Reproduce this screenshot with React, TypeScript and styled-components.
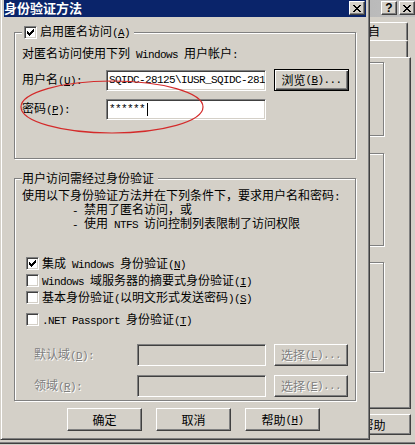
import React from 'react';
import styled, { createGlobalStyle, css } from 'styled-components';

const FACE = '#d4d0c8';

const GlobalStyle = createGlobalStyle`
  html, body {
    margin: 0;
    padding: 0;
    background: ${FACE};
  }
  body {
    font-family: "Noto Sans CJK SC", "Noto Sans", sans-serif;
    font-size: 12px;
    color: #000;
  }
`;

const raised = css`
  background: ${FACE};
  border: 1px solid;
  border-color: #fff #404040 #404040 #fff;
  box-shadow: inset -1px -1px 0 #808080;
`;

const sunken = css`
  border: 1px solid;
  border-color: #808080 #fff #fff #808080;
  box-shadow: inset 1px 1px 0 #404040, inset -1px -1px 0 ${FACE};
`;

const etched = css`
  border: 1px solid #808080;
  box-shadow: 1px 1px 0 #fff, inset 1px 1px 0 #fff;
`;

const disabledText = css`
  color: #808080;
  text-shadow: 1px 1px 0 #fff;
`;

const Desktop = styled.div`
  position: relative;
  width: 415px;
  height: 445px;
  overflow: hidden;
  background: ${FACE};
`;

const Window = styled.div<{ $left: number; $width: number; $height: number }>`
  position: absolute;
  top: -5px;
  left: ${(p) => p.$left}px;
  width: ${(p) => p.$width}px;
  height: ${(p) => p.$height}px;
  box-sizing: border-box;
  display: flex;
  flex-direction: column;
  padding: 3px;
  background: ${FACE};
  border: 1px solid;
  border-color: ${FACE} #404040 #404040 ${FACE};
  box-shadow: inset 1px 1px 0 #fff, inset -1px -1px 0 #808080;
`;

const TitleBar = styled.div<{ $active?: boolean }>`
  flex: none;
  height: 18px;
  display: flex;
  align-items: center;
  justify-content: ${(p) => (p.$active ? 'space-between' : 'flex-end')};
  padding-right: 1px;
  background: ${(p) =>
    p.$active ? '#0a246a' : 'linear-gradient(to right, #808080, #c0c0c0)'};
`;

const TitleText = styled.span`
  color: #fff;
  font-size: 13px;
  font-weight: bold;
  line-height: 18px;
  white-space: nowrap;
`;

const CaptionButtons = styled.div`
  display: flex;
  gap: 2px;
`;

const CaptionButton = styled.div`
  ${raised};
  box-sizing: border-box;
  width: 16px;
  height: 14px;
  display: flex;
  align-items: center;
  justify-content: center;
  font-family: "Liberation Sans", sans-serif;
  font-size: 12px;
  font-weight: bold;
  line-height: 12px;
`;

const Client = styled.div`
  display: flex;
  flex-direction: column;
  padding: 15px 10px 0;
`;

const GroupBox = styled.div<{ $height: number; $mt?: number; $pt: number }>`
  ${etched};
  position: relative;
  box-sizing: border-box;
  height: ${(p) => p.$height}px;
  margin-top: ${(p) => p.$mt ?? 0}px;
  padding: ${(p) => p.$pt}px 0 0 7px;
`;

const Legend = styled.div`
  position: absolute;
  top: -8px;
  left: 7px;
  height: 14px;
  display: flex;
  align-items: center;
  gap: 3px;
  padding-right: 4px;
  background: ${FACE};
  line-height: 14px;
  white-space: nowrap;
`;

const Text = styled.div<{ $lh?: number; $indent?: number }>`
  line-height: ${(p) => p.$lh ?? 14}px;
  padding-left: ${(p) => p.$indent ?? 0}px;
  white-space: nowrap;
`;

const Latin = styled.span`
  font-family: "Liberation Mono", monospace;
  font-size: 11px;
  letter-spacing: -0.6px;
`;

const Under = styled.u`
  text-underline-offset: 1px;
`;

const FieldRow = styled.div<{ $mt: number; $indent?: number }>`
  display: flex;
  align-items: center;
  height: 22px;
  margin-top: ${(p) => p.$mt}px;
  padding-left: ${(p) => p.$indent ?? 0}px;
`;

const FieldLabel = styled.div<{ $width: number; $disabled?: boolean }>`
  flex: none;
  width: ${(p) => p.$width}px;
  line-height: 14px;
  white-space: nowrap;
  ${(p) => p.$disabled && disabledText};
`;

const Field = styled.div<{ $width: number; $disabled?: boolean }>`
  ${sunken};
  flex: none;
  box-sizing: border-box;
  width: ${(p) => p.$width}px;
  height: ${(p) => (p.$disabled ? 22 : 21)}px;
  display: flex;
  align-items: center;
  padding-left: 2px;
  overflow: hidden;
  white-space: nowrap;
  line-height: 14px;
  background: ${(p) => (p.$disabled ? FACE : '#fff')};
`;

const Caret = styled.span`
  display: inline-block;
  width: 1px;
  height: 13px;
  margin-left: 2px;
  background: #000;
`;

const Button = styled.div<{
  $width: number;
  $height: number;
  $ml?: number;
  $default?: boolean;
  $disabled?: boolean;
}>`
  flex: none;
  box-sizing: border-box;
  width: ${(p) => p.$width}px;
  height: ${(p) => p.$height}px;
  margin-left: ${(p) => p.$ml ?? 0}px;
  display: flex;
  align-items: center;
  justify-content: center;
  line-height: 14px;
  white-space: nowrap;
  ${(p) =>
    p.$default
      ? css`
          background: ${FACE};
          border: 1px solid #000;
          box-shadow: inset 1px 1px 0 #fff, inset -1px -1px 0 #404040,
            inset -2px -2px 0 #808080;
        `
      : raised};
  ${(p) => p.$disabled && disabledText};
`;

const CheckRow = styled.div<{ $mt?: number }>`
  display: flex;
  align-items: center;
  gap: 3px;
  height: 17px;
  margin-top: ${(p) => p.$mt ?? 0}px;
  padding-left: 2px;
  line-height: 14px;
  white-space: nowrap;
`;

const CheckBox = styled.span`
  ${sunken};
  flex: none;
  box-sizing: border-box;
  width: 13px;
  height: 13px;
  margin-left: 2px;
  position: relative;
  background: #fff;
`;

const CheckMark = styled.svg`
  position: absolute;
  left: -1px;
  top: -1px;
`;

const ButtonRow = styled.div<{ $pl?: number; $pr?: number; $mt: number; $gap?: number; $end?: boolean }>`
  display: flex;
  justify-content: ${(p) => (p.$end ? 'flex-end' : 'flex-start')};
  gap: ${(p) => p.$gap ?? 0}px;
  margin-top: ${(p) => p.$mt}px;
  padding-left: ${(p) => p.$pl ?? 0}px;
  padding-right: ${(p) => p.$pr ?? 0}px;
`;

const Annotation = styled.svg`
  position: absolute;
  left: 0;
  top: 0;
  overflow: visible;
  pointer-events: none;
`;

/* property sheet behind the dialog */

const SheetBody = styled.div`
  display: flex;
  flex-direction: column;
  padding-top: 5px;
`;

const TabRow = styled.div<{ $height: number }>`
  display: flex;
  justify-content: flex-end;
  height: ${(p) => p.$height}px;
  padding-right: 8px;
`;

const Tab = styled.div`
  box-sizing: border-box;
  width: 120px;
  height: 100%;
  padding-right: 27px;
  border-top: 1px solid #fff;
  border-left: 1px solid #fff;
  border-right: 1px solid #404040;
  border-radius: 2px 2px 0 0;
  box-shadow: inset -1px 0 0 #808080;
  text-align: right;
  line-height: 16px;
  white-space: nowrap;
`;

const SheetPanel = styled.div`
  box-sizing: border-box;
  height: 352px;
  margin-right: 5px;
  display: flex;
  flex-direction: column;
  padding: 4px 26px 0 10px;
  border: 1px solid;
  border-color: #fff #404040 #404040 #fff;
  box-shadow: inset -1px -1px 0 #808080;
`;

const SheetGroup = styled.div<{ $height: number; $mt: number }>`
  ${etched};
  box-sizing: border-box;
  height: ${(p) => p.$height}px;
  margin-top: ${(p) => p.$mt}px;
`;

const Key = ({ k }: { k: string }) => (
  <Latin>
    (<Under>{k}</Under>)
  </Latin>
);

const Check = ({ checked }: { checked?: boolean }) => (
  <CheckBox>
    {checked && (
      <CheckMark width="13" height="13" viewBox="0 0 13 13" shapeRendering="crispEdges">
        <path
          fill="#000"
          d="M3 5h1v3h-1zM4 6h1v3h-1zM5 7h1v3h-1zM6 6h1v3h-1zM7 5h1v3h-1zM8 4h1v3h-1zM9 3h1v3h-1z"
        />
      </CheckMark>
    )}
  </CheckBox>
);

const CloseGlyph = () => (
  <svg width="8" height="7" viewBox="0 0 8 7" shapeRendering="crispEdges">
    <path
      fill="#000"
      d="M0 0h2v1h-2zM6 0h2v1h-2zM1 1h2v1h-2zM5 1h2v1h-2zM2 2h4v1h-4zM3 3h2v1h-2zM2 4h4v1h-4zM1 5h2v1h-2zM5 5h2v1h-2zM0 6h2v1h-2zM6 6h2v1h-2z"
    />
  </svg>
);

const PropertySheet = () => (
  <Window $left={-60} $width={480} $height={449}>
    <TitleBar>
      <CaptionButtons>
        <CaptionButton>?</CaptionButton>
        <CaptionButton>
          <CloseGlyph />
        </CaptionButton>
      </CaptionButtons>
    </TitleBar>
    <SheetBody>
      <TabRow $height={18}>
        <Tab>自</Tab>
      </TabRow>
      <TabRow $height={17}>
        <Tab />
      </TabRow>
      <SheetPanel>
        <SheetGroup $height={74} $mt={0} />
        <SheetGroup $height={93} $mt={17} />
        <SheetGroup $height={110} $mt={16} />
      </SheetPanel>
      <ButtonRow $mt={5} $pr={5} $end>
        <Button $width={75} $height={21}>帮助</Button>
      </ButtonRow>
    </SheetBody>
  </Window>
);

const AuthDialog = () => (
  <Window $left={0} $width={370} $height={445}>
    <TitleBar $active>
      <TitleText>身份验证方法</TitleText>
      <CaptionButton>
        <CloseGlyph />
      </CaptionButton>
    </TitleBar>
    <Client>
      <GroupBox $height={127} $pt={13}>
        <Legend>
          <Check checked />
          <span>
            启用匿名访问<Key k="A" />
          </span>
        </Legend>
        <Text>
          对匿名访问使用下列<Latin> Windows </Latin>用户帐户<Latin>:</Latin>
        </Text>
        <FieldRow $mt={7}>
          <FieldLabel $width={84}>
            用户名<Key k="U" />
            <Latin>:</Latin>
          </FieldLabel>
          <Field $width={160}>
            <Latin>SQIDC-28125\IUSR_SQIDC-281</Latin>
          </Field>
          <Button $width={75} $height={22} $ml={8} $default>
            浏览<Key k="B" />
            <Latin>...</Latin>
          </Button>
        </FieldRow>
        <FieldRow $mt={7}>
          <FieldLabel $width={84}>
            密码<Key k="P" />
            <Latin>:</Latin>
          </FieldLabel>
          <Field $width={160}>
            <Latin>******</Latin>
            <Caret />
          </Field>
        </FieldRow>
        <Annotation width="200" height="110">
          <ellipse cx="97" cy="74" rx="91" ry="26" fill="none" stroke="#d42a2a" strokeWidth="1.2" />
        </Annotation>
      </GroupBox>

      <GroupBox $height={223} $mt={19} $pt={10}>
        <Legend>
          <span>用户访问需经过身份验证</span>
        </Legend>
        <Text $lh={12}>
          使用以下身份验证方法并在下列条件下，要求用户名和密码<Latin>:</Latin>
        </Text>
        <Text $lh={12} $indent={50}>
          <Latin>- </Latin>禁用了匿名访问，或
        </Text>
        <Text $lh={12} $indent={50}>
          <Latin>- </Latin>使用<Latin> NTFS </Latin>访问控制列表限制了访问权限
        </Text>

        <CheckRow $mt={24}>
          <Check checked />
          <span>
            集成<Latin> Windows </Latin>身份验证<Key k="N" />
          </span>
        </CheckRow>
        <CheckRow>
          <Check />
          <span>
            <Latin>Windows </Latin>域服务器的摘要式身份验证<Key k="I" />
          </span>
        </CheckRow>
        <CheckRow>
          <Check />
          <span>
            基本身份验证<Latin>(</Latin>以明文形式发送密码<Latin>)</Latin>
            <Key k="S" />
          </span>
        </CheckRow>
        <CheckRow $mt={5}>
          <Check />
          <span>
            <Latin>.NET Passport </Latin>身份验证<Key k="T" />
          </span>
        </CheckRow>

        <FieldRow $mt={16} $indent={12}>
          <FieldLabel $width={103} $disabled>
            默认域<Key k="D" />
            <Latin>:</Latin>
          </FieldLabel>
          <Field $width={129} $disabled />
          <Button $width={74} $height={22} $ml={8} $disabled>
            选择<Key k="L" />
            <Latin>...</Latin>
          </Button>
        </FieldRow>
        <FieldRow $mt={9} $indent={12}>
          <FieldLabel $width={103} $disabled>
            领域<Key k="R" />
            <Latin>:</Latin>
          </FieldLabel>
          <Field $width={129} $disabled />
          <Button $width={74} $height={22} $ml={8} $disabled>
            选择<Key k="E" />
            <Latin>...</Latin>
          </Button>
        </FieldRow>
      </GroupBox>

      <ButtonRow $mt={7} $pl={53} $gap={14}>
        <Button $width={75} $height={23}>确定</Button>
        <Button $width={75} $height={23}>取消</Button>
        <Button $width={75} $height={23}>
          帮助<Key k="H" />
        </Button>
      </ButtonRow>
    </Client>
  </Window>
);

const App: React.FC = () => (
  <>
    <GlobalStyle />
    <Desktop>
      <PropertySheet />
      <AuthDialog />
    </Desktop>
  </>
);

export default App;
